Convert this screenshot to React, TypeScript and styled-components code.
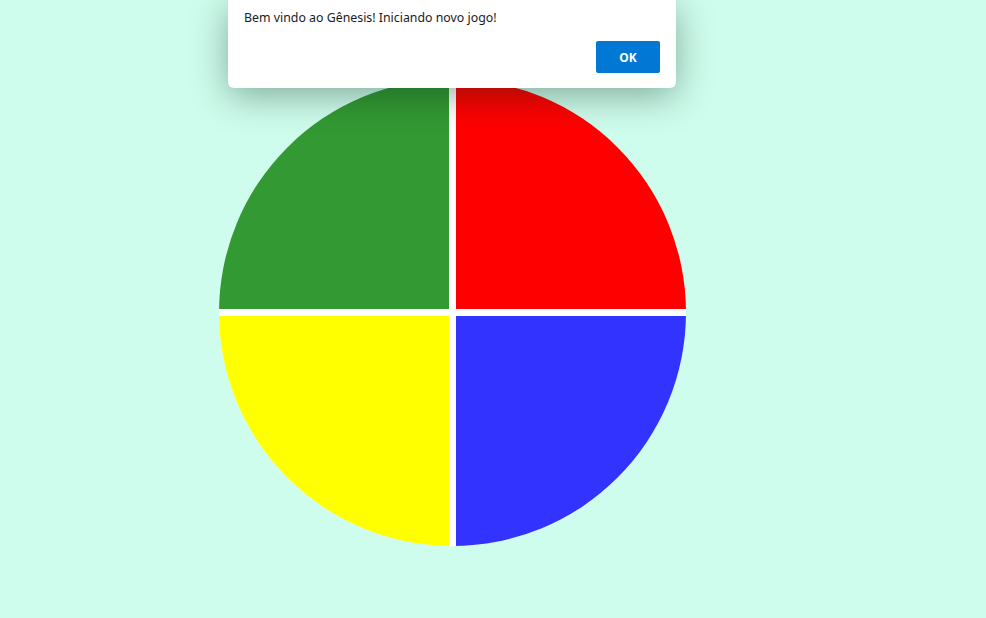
import React from "react";
import styled, { createGlobalStyle } from "styled-components";

const Global = createGlobalStyle`
  html, body { margin: 0; padding: 0; }
  body { background: #cffded; font-family: "Noto Sans", "Open Sans", sans-serif; }
`;

const Page = styled.main`
  position: relative;
  width: 986px;
  height: 618px;
  overflow: hidden;
  background: #cffded;
  padding: 79px 0 0 219px;
  box-sizing: border-box;
`;

const Board = styled.div`
  display: grid;
  grid-template-columns: 230px 230px;
  grid-template-rows: 230px 230px;
  gap: 7px;
  width: 467px;
  height: 467px;
  background: #ffffff;
  border-radius: 50%;
  overflow: hidden;
`;

const Pad = styled.div<{ $color: string }>`
  background: ${(p) => p.$color};
`;

const Dialog = styled.div`
  position: absolute;
  left: 228px;
  top: 0;
  width: 448px;
  height: 88px;
  background: #ffffff;
  border-radius: 0 0 6px 6px;
  box-shadow: 0 8px 36px rgba(0, 40, 20, 0.38);
  box-sizing: border-box;
  padding: 9px 16px 0 16px;
  display: flex;
  flex-direction: column;
`;

const Message = styled.p`
  margin: 0;
  font-family: "Noto Sans", sans-serif;
  font-size: 12.35px;
  line-height: 18px;
  color: #1b1b1b;
`;

const Actions = styled.div`
  display: flex;
  justify-content: flex-end;
  margin-top: 14px;
`;

const OkButton = styled.button`
  width: 64px;
  height: 32px;
  border: none;
  border-radius: 2px;
  background: #0078d4;
  color: #ffffff;
  font-family: "Noto Sans", sans-serif;
  font-weight: 700;
  font-size: 12px;
  padding: 0;
  cursor: pointer;
`;

export default function App() {
  return (
    <>
      <Global />
      <Page>
        <Board>
          <Pad $color="#339933" />
          <Pad $color="#ff0000" />
          <Pad $color="#ffff00" />
          <Pad $color="#3333ff" />
        </Board>
        <Dialog>
          <Message>Bem vindo ao Gênesis! Iniciando novo jogo!</Message>
          <Actions>
            <OkButton>OK</OkButton>
          </Actions>
        </Dialog>
      </Page>
    </>
  );
}
